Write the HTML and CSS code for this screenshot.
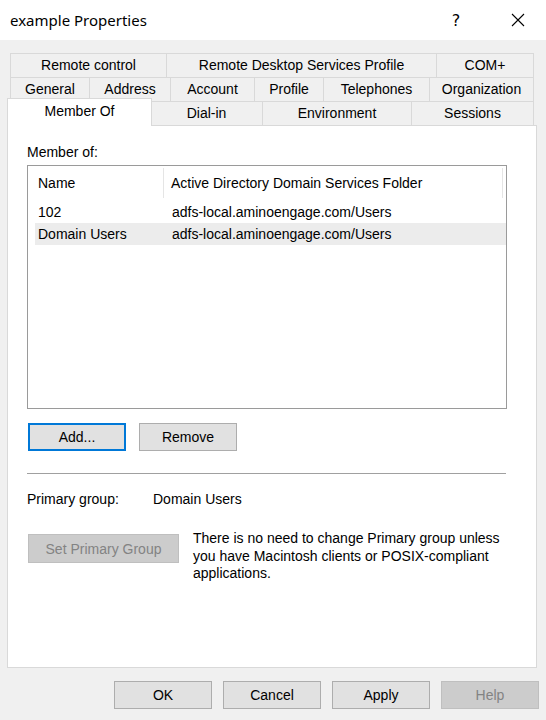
FILE: index.html
```html
<!DOCTYPE html>
<html lang="en">
<head>
  <meta charset="UTF-8" />
  <title>example Properties</title>
  <link rel="stylesheet" href="styles.css">
</head>
<body>
  <div class="titlebar">
    <span class="title">example Properties</span>
    <span class="title-btn help">?</span>
    <span class="title-btn close">
      <svg width="14" height="14" viewBox="0 0 14 14"><path d="M1 1 L13 13 M13 1 L1 13" stroke="#000" stroke-width="1.1" fill="none"/></svg>
    </span>
  </div>

  <div class="dialog">
    <div class="tabs">
      <div class="tab-row row1">
        <div class="tab">Remote control</div>
        <div class="tab">Remote Desktop Services Profile</div>
        <div class="tab last">COM+</div>
      </div>
      <div class="tab-row row2">
        <div class="tab">General</div>
        <div class="tab">Address</div>
        <div class="tab">Account</div>
        <div class="tab">Profile</div>
        <div class="tab">Telephones</div>
        <div class="tab last">Organization</div>
      </div>
      <div class="tab-row row3">
        <div class="tab active">Member Of</div>
        <div class="tab">Dial-in</div>
        <div class="tab">Environment</div>
        <div class="tab last">Sessions</div>
      </div>
    </div>

    <div class="panel">
      <div class="label">Member of:</div>
      <div class="listbox">
        <div class="list-head">
          <div class="head-cell">Name</div>
          <div class="head-cell">Active Directory Domain Services Folder</div>
        </div>
        <div class="list-row">
          <span class="col-name">102</span>
          <span class="col-folder">adfs-local.aminoengage.com/Users</span>
        </div>
        <div class="list-row selected">
          <span class="col-name">Domain Users</span>
          <span class="col-folder">adfs-local.aminoengage.com/Users</span>
        </div>
      </div>

      <div class="btn-row">
        <button class="btn focused">Add...</button>
        <button class="btn">Remove</button>
      </div>

      <div class="separator"></div>

      <div class="primary-row">
        <span class="primary-label">Primary group:</span>
        <span>Domain Users</span>
      </div>

      <div class="set-row">
        <button class="btn wide" disabled>Set Primary Group</button>
        <p class="note">There is no need to change Primary group unless<br>you have Macintosh clients or POSIX-compliant<br>applications.</p>
      </div>
    </div>

    <div class="footer">
      <button class="btn">OK</button>
      <button class="btn">Cancel</button>
      <button class="btn">Apply</button>
      <button class="btn" disabled>Help</button>
    </div>
  </div>
</body>
</html>
```

FILE: styles.css
```css
body {
  margin: 0;
  background: #f0f0f0;
  font-family: "Liberation Sans", Arial, sans-serif;
  font-size: 14px;
  color: #000;
}

/* window title */
.titlebar {
  height: 40px;
  background: #fff;
  display: flex;
  align-items: center;
  padding-left: 10px;
}
.title {
  font-family: "Noto Sans", "Open Sans", sans-serif;
  font-size: 15px;
  flex: 1;
}
.title-btn {
  width: 46px;
  display: flex;
  justify-content: center;
  align-items: center;
}
.help {
  font-family: "DejaVu Sans", sans-serif;
  font-size: 16px;
}
.close {
  margin-left: 16px;
  margin-right: 5px;
}

/* tabs */
.dialog {
  padding-top: 13px;
}
.tabs {
  margin-left: 10px;
  width: 524px;
}
.tab-row {
  display: grid;
  height: 24px;
}
.row1 { grid-template-columns: 156px 270px 98px; }
.row2 { grid-template-columns: 79px 81px 84px 69px 106px 105px; }
.row3 { grid-template-columns: 140px 112px 149px 123px; }
.tab {
  box-sizing: border-box;
  border-top: 1px solid #d9d9d9;
  border-left: 1px solid #d9d9d9;
  background: #f0f0f0;
  text-align: center;
  line-height: 23px;
  white-space: nowrap;
}
.tab.last {
  border-right: 1px solid #d9d9d9;
}
.tab.active {
  position: relative;
  z-index: 1;
  margin: -3px -2px -1px -3px;
  background: #fff;
  border-right: 1px solid #d9d9d9;
  line-height: 24px;
}

/* page body */
.panel {
  box-sizing: border-box;
  margin-left: 7px;
  width: 530px;
  height: 543px;
  background: #fff;
  border: 1px solid #d9d9d9;
  padding: 18px 0 0 19px;
}
.label {
  line-height: 16px;
}
.listbox {
  box-sizing: border-box;
  margin-top: 5px;
  width: 480px;
  height: 244px;
  border: 1px solid #9a9a9a;
}
.list-head {
  display: grid;
  grid-template-columns: 136px 339px;
  margin-top: 2px;
}
.head-cell {
  height: 30px;
  line-height: 30px;
  padding-left: 10px;
  border-right: 1px solid #e5e5e5;
}
.head-cell + .head-cell {
  padding-left: 7px;
}
.list-row {
  display: grid;
  grid-template-columns: 129px 340px;
  margin-left: 7px;
  height: 22px;
  line-height: 22px;
}
.list-head + .list-row {
  margin-top: 3px;
}
.list-row.selected {
  background: #ececec;
}
.col-name {
  padding-left: 3px;
}
.col-folder {
  padding-left: 8px;
}

/* buttons */
.btn {
  box-sizing: border-box;
  width: 98px;
  height: 28px;
  background: #e1e1e1;
  border: 1px solid #adadad;
  font-family: "Liberation Sans", Arial, sans-serif;
  font-size: 14px;
  color: #000;
  padding: 0;
}
.btn.focused {
  border-color: #0078d7;
  box-shadow: inset 0 0 0 1px #0078d7;
}
.btn:disabled {
  background: #cccccc;
  border-color: #bfbfbf;
  color: #838383;
}
.btn.wide {
  width: 151px;
  height: 29px;
  margin-top: 4px;
}
.btn-row {
  display: flex;
  gap: 13px;
  margin: 14px 0 0 1px;
}
.separator {
  margin-top: 22px;
  width: 479px;
  border-top: 1px solid #a0a0a0;
}
.primary-row {
  display: flex;
  margin-top: 17px;
  line-height: 16px;
}
.primary-label {
  width: 126px;
}
.set-row {
  display: flex;
  align-items: flex-start;
  gap: 14px;
  margin: 23px 0 0 1px;
}
.note {
  margin: 0;
  line-height: 17.5px;
}
.footer {
  display: flex;
  justify-content: flex-end;
  gap: 11px;
  margin-top: 13px;
  padding-right: 7px;
}
```
